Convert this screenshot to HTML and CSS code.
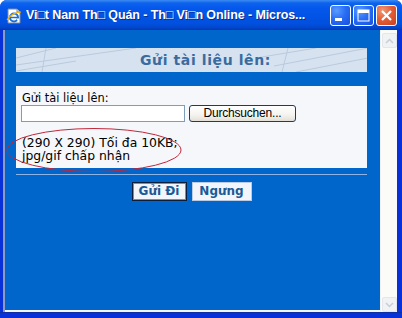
FILE: index.html
```html
<!DOCTYPE html>
<html>
<head>
<meta charset="utf-8">
<link rel="stylesheet" href="styles.css">
</head>
<body>
<div class="window">
  <div class="titlebar">
    <svg class="app-icon" width="16" height="16" viewBox="0 0 16 16">
      <path d="M2 1h9l3 3v11H2z" fill="#fff" stroke="#7a8aa0" stroke-width="1"/>
      <path d="M11 1v3h3" fill="#dde" stroke="#7a8aa0" stroke-width="1"/>
      <circle cx="8" cy="9.5" r="4" fill="none" stroke="#1c6fd8" stroke-width="2"/>
      <path d="M4.5 9.5h7" stroke="#1c6fd8" stroke-width="1.6"/>
      <path d="M11 11.5h2" stroke="#fff" stroke-width="2"/>
      <path d="M1 12c3-5 9-8 14-8" fill="none" stroke="#f2b400" stroke-width="1.2"/>
    </svg>
    <span class="title">Vi□t Nam Th□ Quán - Th□ Vi□n Online - Micros...</span>
    <div class="ctrls">
      <span class="cbtn"><svg width="21" height="21" viewBox="0 0 21 21"><rect x="5" y="13" width="7" height="3" fill="#fff"/></svg></span>
      <span class="cbtn"><svg width="21" height="21" viewBox="0 0 21 21"><rect x="5" y="5" width="11" height="11" fill="none" stroke="#fff" stroke-width="1"/><rect x="5" y="5" width="11" height="3" fill="#fff"/></svg></span>
      <span class="cbtn close"><svg width="21" height="21" viewBox="0 0 21 21"><path d="M6 6l9 9M15 6l-9 9" stroke="#fff" stroke-width="2.2"/></svg></span>
    </div>
  </div>
  <div class="frame">
    <div class="lborder"></div>
    <div class="content">
      <div class="head">
        <svg class="head-lines" width="352" height="24" viewBox="0 0 352 24">
          <g stroke="#b9cade" stroke-width="1" fill="none">
            <path d="M0 10L40 0"/>
            <path d="M26 24L30 0"/>
            <path d="M0 17L120 0"/>
            <path d="M0 23L60 13"/>
            <path d="M266 24L272 0"/>
            <path d="M258 18L352 0"/>
            <path d="M240 10L300 0"/>
            <path d="M280 24L352 10"/>
          </g>
        </svg>
        <span class="head-text">Gửi tài liệu lên:</span>
      </div>
      <div class="panel">
        <div class="lbl">Gửi tài liệu lên:</div>
        <div class="filerow">
          <span class="fileinput"></span>
          <span class="browse">Durchsuchen...</span>
        </div>
        <div class="note">(290 X 290) Tối đa 10KB;<br>jpg/gif chấp nhận</div>
      </div>
      <div class="rule"></div>
      <div class="actions">
        <span class="abtn primary">Gửi Đi</span>
        <span class="abtn">Ngưng</span>
      </div>
      <svg class="ellipse" width="180" height="48" viewBox="0 0 180 48">
        <ellipse cx="89" cy="23" rx="87" ry="21.5" fill="none" stroke="#c0283a" stroke-width="1"/>
      </svg>
    </div>
    <div class="scroll">
      <span class="sbtn"><svg width="9" height="6" viewBox="0 0 9 6"><path d="M1 5l3.5-3.5L8 5" fill="none" stroke="#c8cdd6" stroke-width="1.5"/></svg></span>
      <span class="strack"></span>
      <span class="sbtn"><svg width="9" height="6" viewBox="0 0 9 6"><path d="M1 1l3.5 3.5L8 1" fill="none" stroke="#c8cdd6" stroke-width="1.5"/></svg></span>
    </div>
    <div class="rborder"></div>
  </div>
  <div class="bborder"></div>
</div>
</body>
</html>
```
FILE: styles.css
```css
html, body {
  margin: 0;
  padding: 0;
  background: #ffffff;
}
.window {
  width: 402px;
  height: 318px;
  display: flex;
  flex-direction: column;
  background: #0831d9;
  border-radius: 7px 7px 0 0;
  overflow: hidden;
}
.titlebar {
  height: 30px;
  flex: none;
  display: flex;
  align-items: center;
  padding-left: 6px;
  background: linear-gradient(to bottom, #3c8cf4 0px, #0d63ec 3px, #0558ec 8px, #0254e6 16px, #0150de 24px, #0245c9 28px, #0735b0 30px);
  box-sizing: border-box;
}
.app-icon {
  flex: none;
  margin-top: 1px;
}
.title {
  margin-left: 4px;
  color: #ffffff;
  font-family: "Liberation Sans", sans-serif;
  font-weight: bold;
  font-size: 12.5px;
  letter-spacing: -0.1px;
  white-space: nowrap;
  text-shadow: 1px 1px 0 #0a2a8a;
  flex: 1;
  overflow: hidden;
}
.ctrls {
  display: flex;
  gap: 2px;
  margin-right: 5px;
  margin-top: 1px;
}
.cbtn {
  width: 21px;
  height: 21px;
  box-sizing: border-box;
  border: 1px solid #ffffff;
  border-radius: 3px;
  background: radial-gradient(circle at 30% 25%, #5a9bff 0%, #2a6ef5 45%, #1550e0 100%);
  display: block;
  position: relative;
  overflow: hidden;
}
.cbtn svg {
  position: absolute;
  left: -1px;
  top: -1px;
}
.cbtn.close {
  background: radial-gradient(circle at 30% 25%, #f09a78 0%, #e45f38 45%, #c8401c 100%);
}
.frame {
  flex: 1;
  display: flex;
  min-height: 0;
}
.lborder {
  width: 3px;
  flex: none;
  background: #0831d9;
  border-right: 2px solid #8d9cc4;
}
.content {
  flex: 1;
  position: relative;
  background: #0066cc;
  padding: 18px 13px 0 11px;
  display: flex;
  flex-direction: column;
  border-bottom: 2px solid #f4f6fa;
}
.head {
  position: relative;
  height: 24px;
  background: #d6e2ef;
  display: flex;
  align-items: center;
  justify-content: center;
  overflow: hidden;
}
.head-lines {
  position: absolute;
  left: 0;
  top: 0;
}
.head-text {
  position: relative;
  margin-left: 28px;
  color: #3b6b9e;
  font-family: "DejaVu Sans", sans-serif;
  font-weight: bold;
  font-size: 14px;
  letter-spacing: 0.6px;
}
.panel {
  margin-top: 14px;
  height: 82px;
  box-sizing: border-box;
  background: #f5f7fb;
  padding: 5px 5px 0 5px;
  font-family: "DejaVu Sans", sans-serif;
  font-size: 11.4px;
  color: #000000;
}
.lbl {
  line-height: 14px;
  padding-left: 1px;
}
.filerow {
  display: flex;
  gap: 4px;
  margin-top: 0;
}
.fileinput {
  width: 164px;
  height: 17px;
  box-sizing: border-box;
  background: #ffffff;
  border: 1px solid #7f9db9;
  display: block;
}
.browse {
  width: 107px;
  height: 17px;
  box-sizing: border-box;
  border: 1px solid #1d3b66;
  border-radius: 3px;
  background: linear-gradient(to bottom, #ffffff 0%, #f4f3ee 60%, #e2dfd6 100%);
  font-family: "Liberation Sans", sans-serif;
  font-size: 12px;
  line-height: 15px;
  text-align: center;
  color: #000000;
  letter-spacing: -0.2px;
}
.note {
  margin-top: 14px;
  line-height: 13px;
  padding-left: 1px;
  font-size: 12.4px;
}
.rule {
  margin-top: 6px;
  height: 1px;
  background: #8db4e2;
}
.actions {
  margin-top: 7px;
  display: flex;
  justify-content: center;
  gap: 5px;
}
.abtn {
  height: 19px;
  box-sizing: border-box;
  background: #f2f5fa;
  border: 1px solid #b9cce4;
  color: #1b5a96;
  font-family: "DejaVu Sans", sans-serif;
  font-weight: bold;
  font-size: 12px;
  line-height: 17px;
  text-align: center;
  width: 60px;
}
.abtn.primary {
  width: 55px;
  border: 1px solid #0b1e3c;
  box-shadow: inset 0 0 0 1px #6f8fb8;
}
.ellipse {
  position: absolute;
  left: 0;
  top: 97px;
}
.scroll {
  width: 16px;
  flex: none;
  background: #fbfbf8;
  display: flex;
  flex-direction: column;
  padding: 3px 0 0 0;
  border-left: 1px solid #eef0f4;
}
.sbtn {
  width: 15px;
  height: 15px;
  margin-left: 1px;
  box-sizing: border-box;
  border: 1px solid #e3e6ea;
  border-radius: 2px;
  background: #f1f2f4;
  display: flex;
  align-items: center;
  justify-content: center;
}
.strack {
  flex: 1;
}
.rborder {
  width: 5px;
  flex: none;
  background: #0831d9;
}
.bborder {
  height: 5px;
  flex: none;
  background: #0831d9;
  border-top: 1px solid #0a2fa8;
}
```
